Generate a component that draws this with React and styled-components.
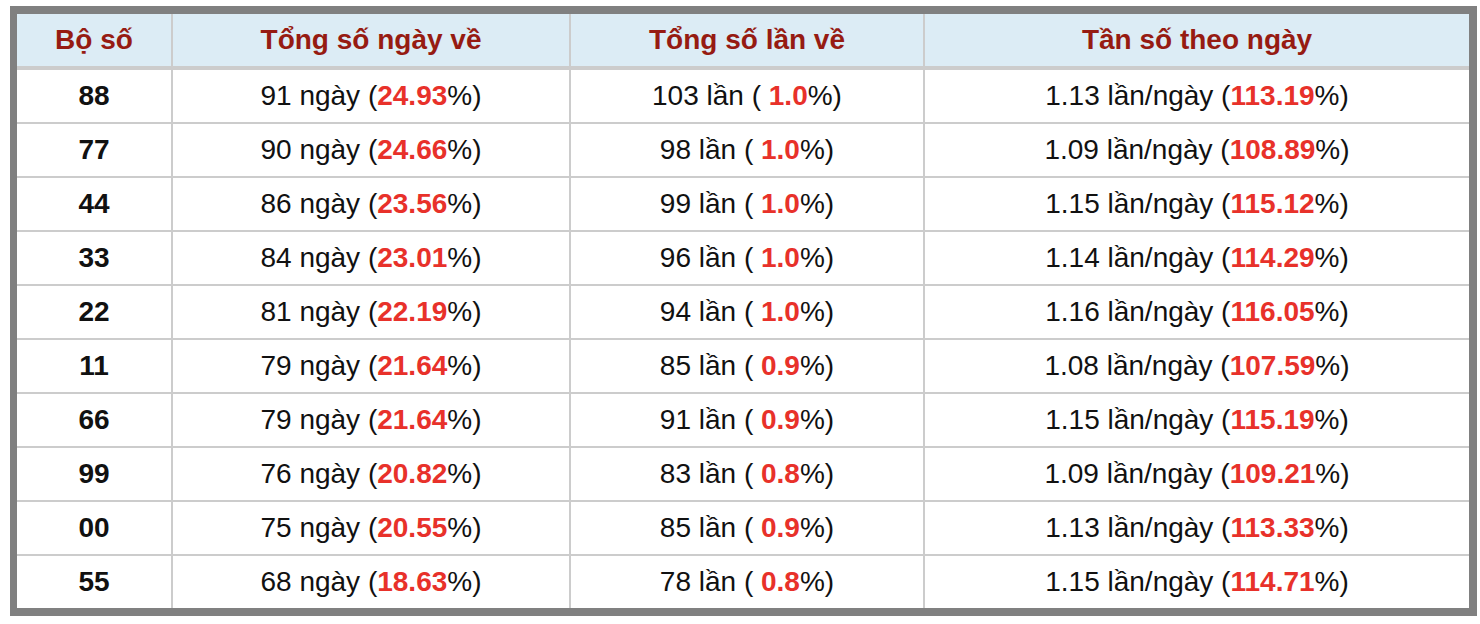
import React from 'react';
import styled, { createGlobalStyle } from 'styled-components';

const GlobalStyle = createGlobalStyle`
  html, body {
    margin: 0;
    padding: 0;
    background: #ffffff;
  }
  body {
    font-family: "Liberation Sans", Arial, sans-serif;
  }
`;

const Page = styled.div`
  padding: 6px 3px 8px 10px;
`;

const Frame = styled.div`
  width: 1467px;
  box-sizing: border-box;
  border: 8px solid #808080;
  border-left-width: 7px;
  background: #fff;
`;

const Table = styled.table`
  width: 100%;
  border-collapse: collapse;
  table-layout: fixed;
`;

const HeadCell = styled.th`
  height: 52px;
  padding: 0;
  background: #dcecf5;
  color: #961b12;
  font-size: 28px;
  font-weight: bold;
  text-align: center;
  border-left: 2px solid #cccccc;
  border-bottom: 4px solid #cccccc;
  &:first-child {
    border-left: none;
  }
`;

const Row = styled.tr`
  &:last-child td {
    border-bottom: none;
  }
`;

const Cell = styled.td`
  height: 52px;
  padding: 0;
  font-size: 28px;
  color: #111;
  text-align: center;
  font-weight: ${(p) => (p.$bold ? 'bold' : 'normal')};
  border-left: 2px solid #cccccc;
  border-bottom: 2px solid #cccccc;
  &:first-child {
    border-left: none;
  }
`;

const Hot = styled.span`
  color: #e8312a;
  font-weight: bold;
`;

const rows = [
  ['88', '91', '24.93', '103', '1.0', '1.13', '113.19'],
  ['77', '90', '24.66', '98', '1.0', '1.09', '108.89'],
  ['44', '86', '23.56', '99', '1.0', '1.15', '115.12'],
  ['33', '84', '23.01', '96', '1.0', '1.14', '114.29'],
  ['22', '81', '22.19', '94', '1.0', '1.16', '116.05'],
  ['11', '79', '21.64', '85', '0.9', '1.08', '107.59'],
  ['66', '79', '21.64', '91', '0.9', '1.15', '115.19'],
  ['99', '76', '20.82', '83', '0.8', '1.09', '109.21'],
  ['00', '75', '20.55', '85', '0.9', '1.13', '113.33'],
  ['55', '68', '18.63', '78', '0.8', '1.15', '114.71'],
];

export default function App() {
  return (
    <>
      <GlobalStyle />
      <Page>
        <Frame>
          <Table>
            <colgroup>
              <col style={{ width: '155px' }} />
              <col style={{ width: '398px' }} />
              <col style={{ width: '354px' }} />
              <col />
            </colgroup>
            <thead>
              <tr>
                <HeadCell>Bộ số</HeadCell>
                <HeadCell>Tổng số ngày về</HeadCell>
                <HeadCell>Tổng số lần về</HeadCell>
                <HeadCell>Tần số theo ngày</HeadCell>
              </tr>
            </thead>
            <tbody>
              {rows.map((r) => (
                <Row key={r[0]}>
                  <Cell $bold>{r[0]}</Cell>
                  <Cell>
                    {r[1]} ngày (<Hot>{r[2]}</Hot>%)
                  </Cell>
                  <Cell>
                    {r[3]} lần ( <Hot>{r[4]}</Hot>%)
                  </Cell>
                  <Cell>
                    {r[5]} lần/ngày (<Hot>{r[6]}</Hot>%)
                  </Cell>
                </Row>
              ))}
            </tbody>
          </Table>
        </Frame>
      </Page>
    </>
  );
}
